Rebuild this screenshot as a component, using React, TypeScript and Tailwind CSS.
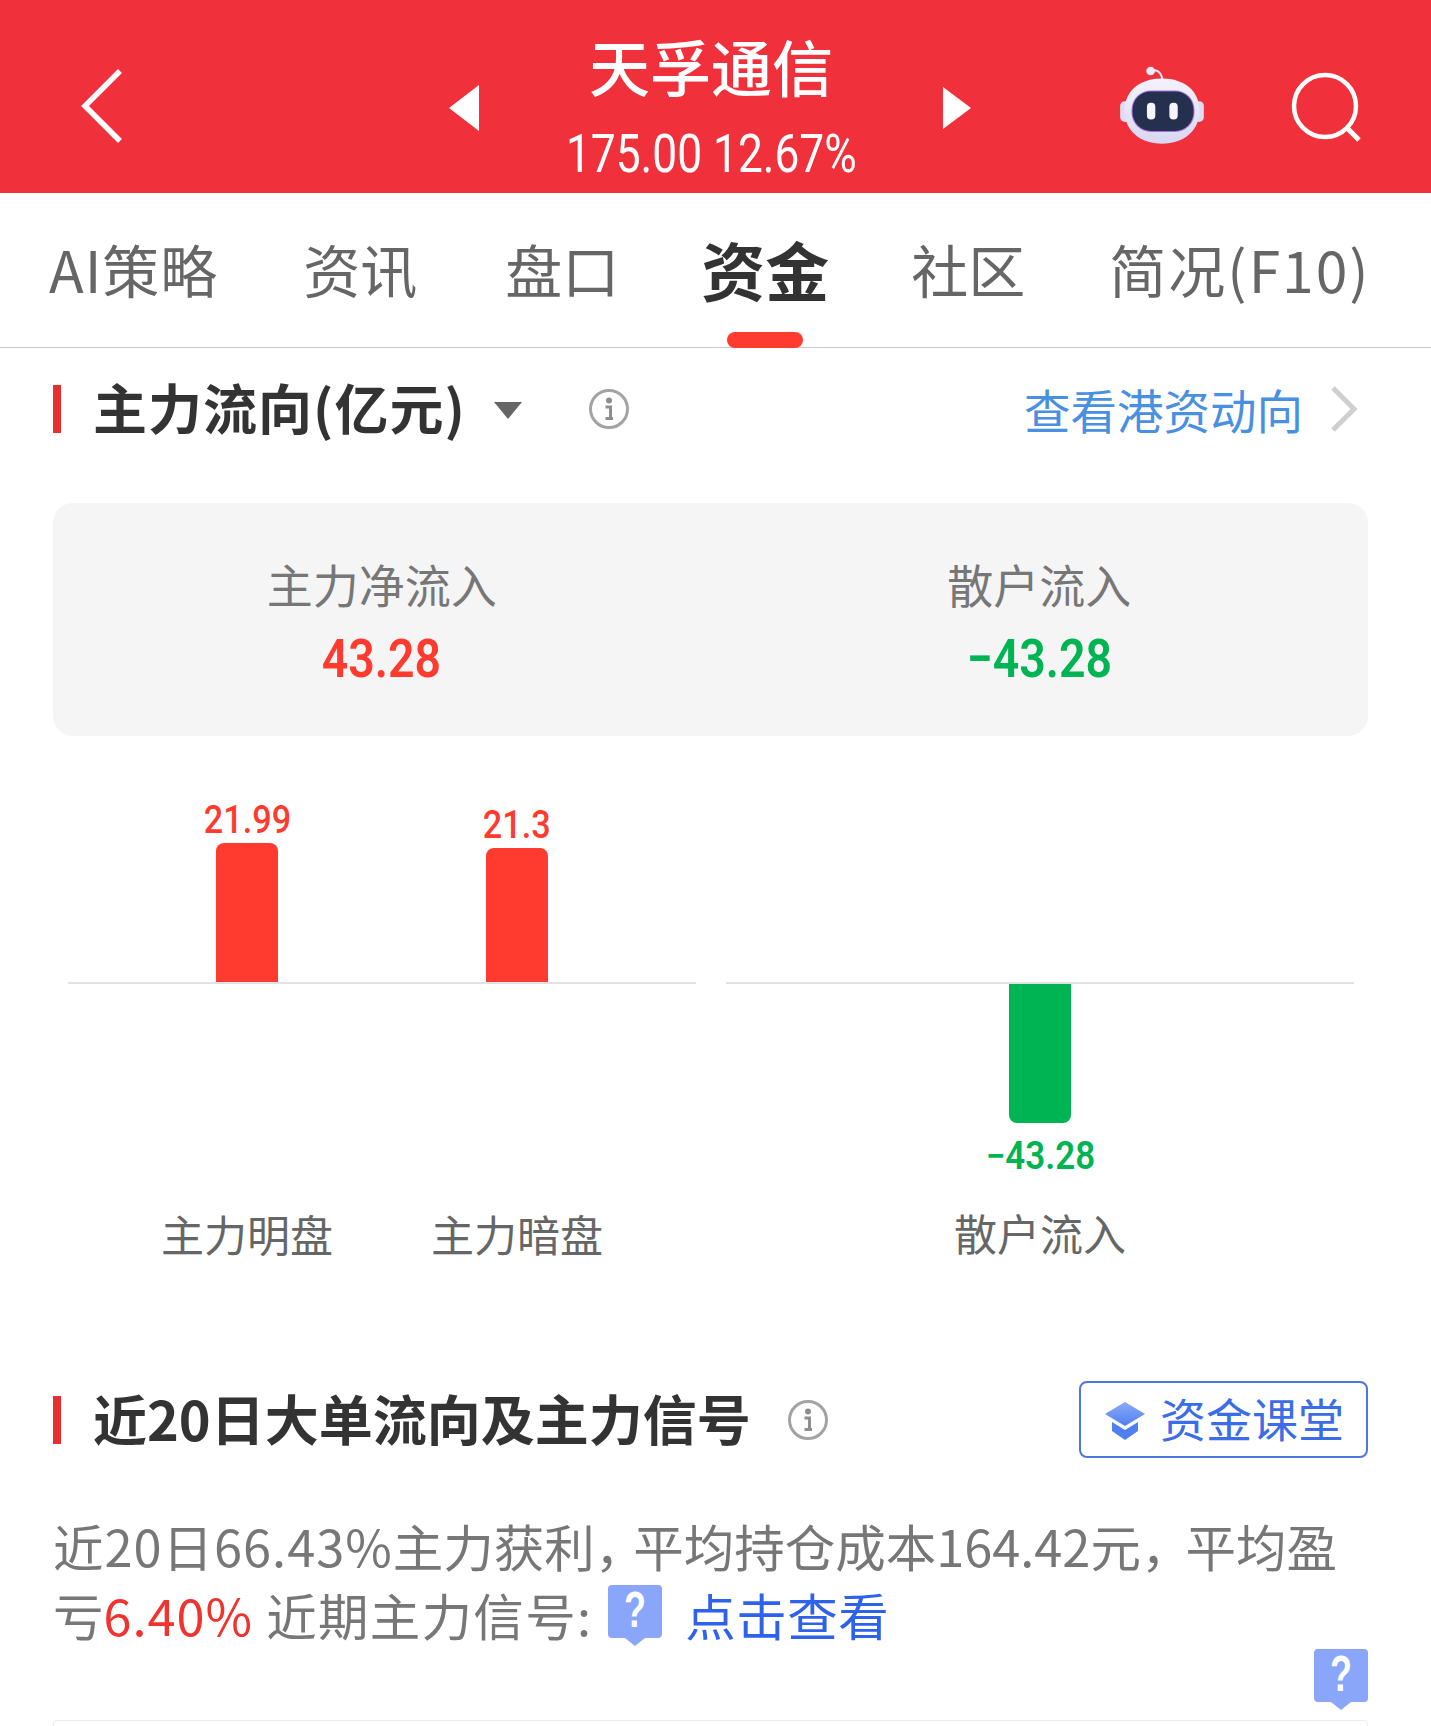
import React from 'react';

const cjk = "font-['Noto_Sans_CJK_SC','Noto_Sans',sans-serif]";
const digits = "inline-block font-['Roboto',sans-serif] whitespace-nowrap";

const InfoIcon: React.FC = () => (
  <svg width="42" height="42" viewBox="0 0 42 42" fill="none" className="shrink-0">
    <circle cx="21" cy="21" r="18.5" stroke="#a3a3a3" strokeWidth="3" />
    <circle cx="21" cy="12.5" r="3" fill="#8e8e8e" />
    <path d="M17.5 19h5v11M17.5 30.5h7.5" stroke="#8e8e8e" strokeWidth="3" />
  </svg>
);

const QuestionBadge: React.FC<{ className?: string }> = ({ className }) => (
  <div className={`relative h-[53px] w-[54px] shrink-0 rounded-[4px] bg-[#8aa6fb] ${className ?? ''}`}>
    <span className="flex h-[50px] scale-x-[0.72] items-center justify-center font-['Liberation_Sans',sans-serif] text-[50px] leading-none font-bold text-white">?</span>
    <div className="absolute top-[53px] left-[17px] h-0 w-0 border-x-[10px] border-t-[8px] border-x-transparent border-t-[#8aa6fb]" />
  </div>
);

const BotIcon: React.FC = () => (
  <svg width="84" height="78" viewBox="90 80 250 233" className="shrink-0">
    <defs>
      <linearGradient id="bot-shell" x1="0" y1="0" x2="0" y2="1">
        <stop offset="0" stopColor="#f4f3fb" />
        <stop offset="1" stopColor="#d9d7f2" />
      </linearGradient>
    </defs>
    <path d="M180 96c14-8 32-2 36 24" fill="none" stroke="#ecebf8" strokeWidth="6" />
    <circle cx="181" cy="95" r="13" fill="#ecebf8" />
    <rect x="90" y="185" width="30" height="62" rx="14" fill="#dedcf3" />
    <rect x="312" y="185" width="28" height="62" rx="14" fill="#dedcf3" />
    <path d="M215 117c70 0 112 40 112 96 0 60-46 99-112 99s-112-39-112-99c0-56 42-96 112-96z" fill="url(#bot-shell)" />
    <rect x="124" y="153" width="188" height="124" rx="58" fill="#a66fe0" />
    <rect x="127" y="156" width="182" height="118" rx="55" fill="#25304f" />
    <rect x="170" y="190" width="25" height="50" rx="12" fill="#f5f5fb" />
    <rect x="237" y="190" width="25" height="50" rx="12" fill="#f5f5fb" />
  </svg>
);

const CapIcon: React.FC = () => (
  <svg width="42" height="42" viewBox="0 0 42 42" className="shrink-0">
    <defs>
      <linearGradient id="cap-top" x1="0" y1="0" x2="0" y2="1">
        <stop offset="0" stopColor="#8cabf8" />
        <stop offset="1" stopColor="#4f7ff0" />
      </linearGradient>
    </defs>
    <path d="M21 3l20 12-20 12L1 15z" fill="url(#cap-top)" />
    <path d="M8 23l13 8 13-8v9l-13 9-13-9z" fill="#4f7ff0" />
  </svg>
);

const tabs = [
  { label: 'AI策略', style: 'tracking-[1px]' },
  { label: '资讯', style: 'ml-[85px]' },
  { label: '盘口', style: 'ml-[88px]' },
  { label: '资金', active: true, style: 'ml-[82px]' },
  { label: '社区', style: 'ml-[82px]' },
  { label: '简况(F10)', style: 'ml-[84px] tracking-[2px]' },
];

const SectionBar: React.FC = () => <div className="h-[48px] w-[8px] shrink-0 bg-[#e5302f]" />;

const App: React.FC = () => {
  return (
    <div className={`h-[1726px] w-[1431px] overflow-hidden bg-white ${cjk}`}>
      {/* header */}
      <header className="flex h-[193px] items-center bg-[#f0303a] pt-[22px] pl-[81px] text-white">
        <svg width="42" height="76" viewBox="0 0 42 76" fill="none" className="mt-[-4px] shrink-0">
          <path d="M39 3L4 38l35 35" stroke="#fff" strokeWidth="5.5" />
        </svg>
        <div className="ml-[326px] h-0 w-0 border-y-[23px] border-r-[30px] border-y-transparent border-r-white" />
        <div className="flex w-[464px] flex-col items-center self-start pt-[14px]">
          <div className="h-[60px] text-[61px] leading-[60px] font-medium">天孚通信</div>
          <div className={`mt-[32px] scale-x-[0.82] text-[54px] leading-[52px] ${digits}`}>175.00 12.67%</div>
        </div>
        <div className="h-0 w-0 border-y-[21px] border-l-[28px] border-y-transparent border-l-white" />
        <div className="mt-[-5px] ml-[149px]">
          <BotIcon />
        </div>
        <svg width="72" height="72" viewBox="0 0 72 72" fill="none" className="ml-[87px] shrink-0">
          <circle cx="34" cy="34" r="31" stroke="#fff" strokeWidth="4.5" />
          <path d="M56 56l12 12" stroke="#fff" strokeWidth="5" />
        </svg>
      </header>

      {/* tabs */}
      <nav className="flex h-[155px] items-start border-b border-[#c8c8c8] pl-[49px] whitespace-nowrap">
        {tabs.map((tab) => (
          <div key={tab.label} className={`relative h-[155px] pt-[38px] ${tab.style}`}>
            <span className={tab.active ? 'text-[64px] leading-[74px] font-bold text-[#333]' : 'text-[57px] leading-[74px] text-[#666]'}>
              {tab.label}
            </span>
            {tab.active && <div className="absolute bottom-0 left-1/2 h-[16px] w-[76px] -translate-x-1/2 rounded-full bg-[#ff3b30]" />}
          </div>
        ))}
      </nav>

      {/* main flow */}
      <section className="pt-[37px] pr-[63px] pl-[53px]">
        <div className="flex h-[48px] items-center">
          <SectionBar />
          <h2 className="mb-[4px] ml-[32px] text-[54px] leading-[48px] font-bold tracking-[1px] whitespace-nowrap text-[#333]">主力流向(亿元)</h2>
          <div className="mt-[2px] ml-[28px] h-0 w-0 border-x-[14px] border-t-[17px] border-x-transparent border-t-[#666]" />
          <div className="ml-[66px]">
            <InfoIcon />
          </div>
          <span className="ml-auto text-[46.5px] leading-[48px] text-[#4a90e2]">查看港资动向</span>
          <svg width="28" height="48" viewBox="0 0 28 48" fill="none" className="mr-[10px] ml-[27px] shrink-0">
            <path d="M3 3l21 21L3 45" stroke="#cfcfcf" strokeWidth="5" />
          </svg>
        </div>

        <div className="mt-[70px] grid h-[233px] grid-cols-2 rounded-[20px] bg-[#f5f5f5] pt-[50px] text-center">
          <div>
            <div className="text-[46px] leading-[60px] text-[#777]">主力净流入</div>
            <div className={`mt-[16px] scale-x-[0.86] text-[54px] leading-[60px] font-semibold text-[#ff3b30] ${digits}`}>43.28</div>
          </div>
          <div>
            <div className="text-[46px] leading-[60px] text-[#777]">散户流入</div>
            <div className={`mt-[16px] scale-x-[0.86] text-[54px] leading-[60px] font-semibold text-[#00b454] ${digits}`}>−43.28</div>
          </div>
        </div>

        {/* chart */}
        <div className="flex justify-between pr-[14px] pl-[15px]">
          <div className="w-[628px]">
            <div className="grid h-[246px] grid-cols-2 items-end px-[44px]">
              <div className="flex flex-col items-center">
                <span className={`mb-[1px] scale-x-[0.9] text-[38px] leading-[44px] font-medium text-[#ff3b30] ${digits}`}>21.99</span>
                <div className="h-[139px] w-[62px] rounded-t-[8px] bg-[#ff3b30]" />
              </div>
              <div className="flex flex-col items-center">
                <span className={`mb-[1px] scale-x-[0.9] text-[38px] leading-[44px] font-medium text-[#ff3b30] ${digits}`}>21.3</span>
                <div className="h-[134px] w-[62px] rounded-t-[8px] bg-[#ff3b30]" />
              </div>
            </div>
            <div className="h-[2px] bg-[#e2e2e2]" />
            <div className="grid grid-cols-2 px-[44px] pt-[221px] text-center text-[43px] leading-[56px] text-[#666]">
              <span>主力明盘</span>
              <span>主力暗盘</span>
            </div>
          </div>
          <div className="w-[628px]">
            <div className="h-[246px]" />
            <div className="h-[2px] bg-[#e2e2e2]" />
            <div className="flex flex-col items-center">
              <div className="h-[139px] w-[62px] rounded-b-[8px] bg-[#00b454]" />
              <span className={`mt-[11px] scale-x-[0.92] text-[38px] leading-[44px] font-semibold text-[#00b454] ${digits}`}>−43.28</span>
              <span className="mt-[26px] text-[43px] leading-[56px] text-[#666]">散户流入</span>
            </div>
          </div>
        </div>

        {/* second section */}
        <div className="mt-[120px] flex h-[77px] items-center">
          <SectionBar />
          <h2 className="mb-[4px] ml-[32px] text-[54px] leading-[48px] font-bold whitespace-nowrap text-[#333]">近20日大单流向及主力信号</h2>
          <div className="ml-[36px]">
            <InfoIcon />
          </div>
          <button className="ml-auto flex h-[77px] w-[289px] items-center rounded-[8px] border-2 border-[#4a77e0] pl-[23px]">
            <CapIcon />
            <span className="mb-[6px] ml-[14px] text-[46px] leading-[60px] text-[#3b6de8]">资金课堂</span>
          </button>
        </div>

        <div className="mt-[53px] text-[50.5px] leading-[69px] text-[#777]">
          <div className="whitespace-nowrap">
            <span className="tracking-[1px]">近20日66.43%</span>主力获利<span className="tracking-[-12px]">，</span>平均持仓成本164.42元<span className="tracking-[-6px]">，</span>平均盈
          </div>
          <div className="flex items-center whitespace-nowrap">
            <span>亏</span>
            <span className="tracking-[1px] text-[#f1332f]">6.40%</span>
            <span className="ml-[13px] tracking-[1.3px]">近期主力信号:</span>
            <QuestionBadge className="mb-[6px] ml-[16px]" />
            <span className="ml-[23px] tracking-[0.5px] text-[#2f62ea]">点击查看</span>
          </div>
        </div>
        <div className="flex justify-end">
          <QuestionBadge />
        </div>
        <div className="mt-[18px] h-[20px] rounded-t-[4px] border border-[#ececec]" />
      </section>
    </div>
  );
};

export default App;
